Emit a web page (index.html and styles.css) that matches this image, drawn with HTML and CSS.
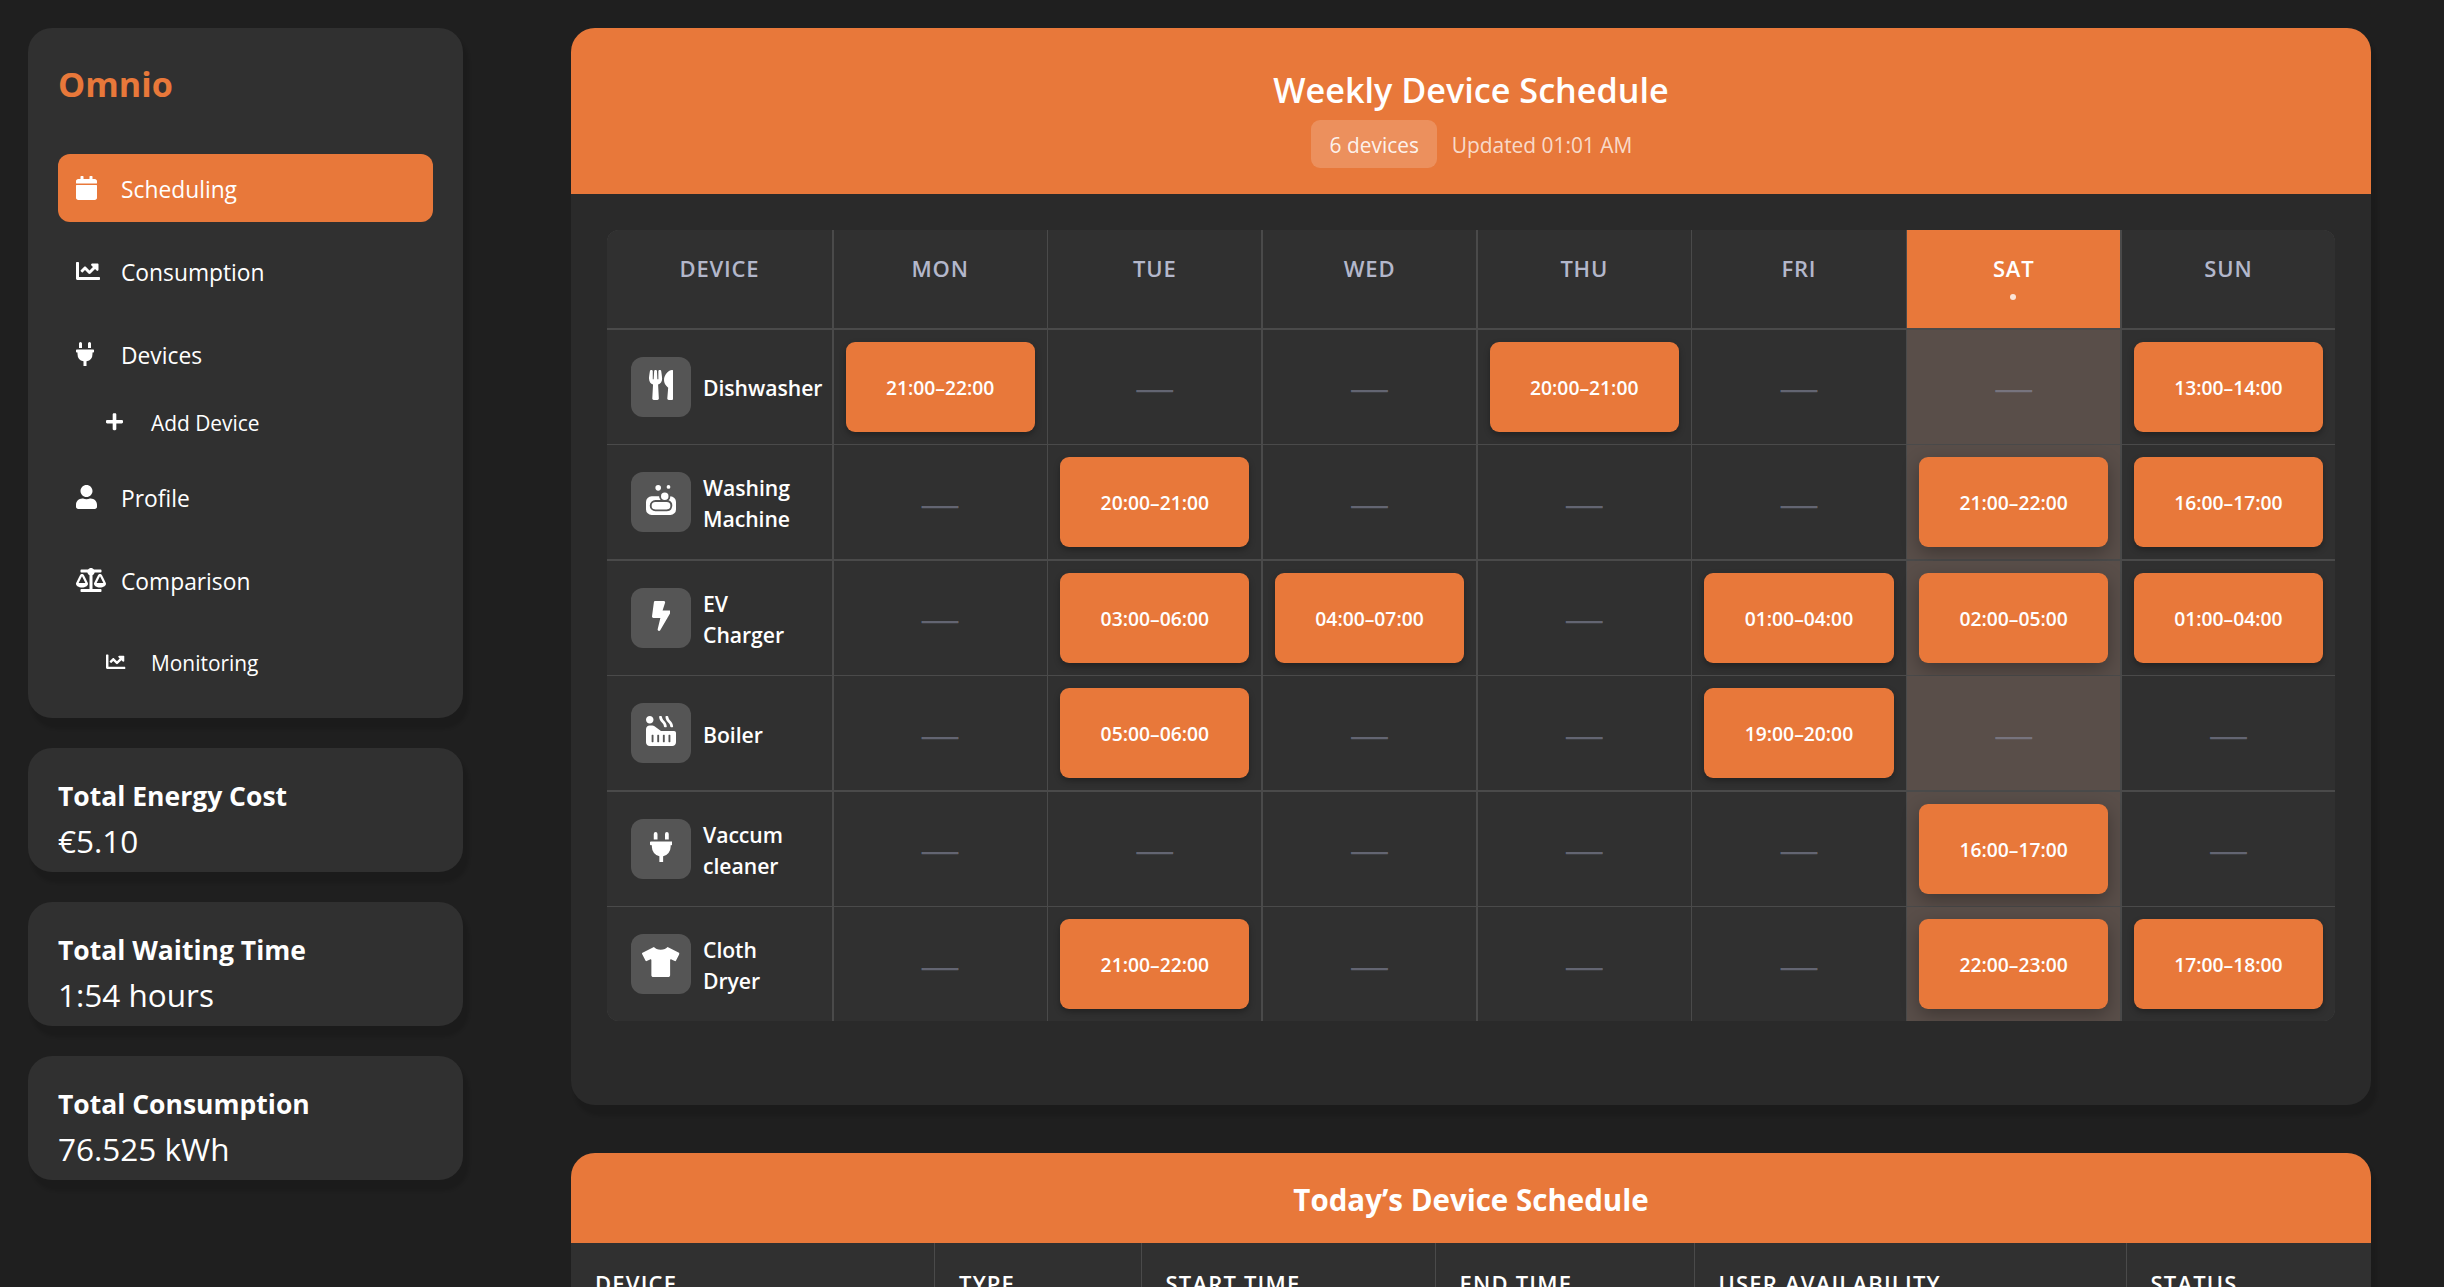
FILE: index.html
```html
<!DOCTYPE html>
<html lang="en">
<head>
<meta charset="utf-8">
<title>Omnio</title>
<link rel="stylesheet" href="styles.css">
</head>
<body>
<svg class="sprite" aria-hidden="true">
  <symbol id="calendar" viewBox="0 0 448 512"><path d="M12 192h424c6.6 0 12 5.4 12 12v260c0 26.5-21.5 48-48 48H48c-26.5 0-48-21.5-48-48V204c0-6.6 5.4-12 12-12zm436-44v-36c0-26.5-21.5-48-48-48h-48V12c0-6.6-5.4-12-12-12h-40c-6.6 0-12 5.4-12 12v52H160V12c0-6.6-5.4-12-12-12h-40c-6.6 0-12 5.4-12 12v52H48C21.5 64 0 85.5 0 112v36c0 6.6 5.4 12 12 12h424c6.6 0 12-5.4 12-12z"/></symbol>
  <symbol id="chart" viewBox="0 0 512 512"><path d="M496 384H64V80c0-8.84-7.16-16-16-16H16C7.16 64 0 71.16 0 80v336c0 17.67 14.33 32 32 32h464c8.84 0 16-7.16 16-16v-32c0-8.84-7.16-16-16-16zM464 96H345.94c-21.38 0-32.09 25.85-16.97 40.97l32.4 32.4L288 242.75l-73.37-73.37c-12.5-12.5-32.76-12.5-45.25 0l-68.69 68.69c-6.25 6.25-6.25 16.38 0 22.63l22.62 22.62c6.25 6.25 16.38 6.25 22.63 0L192 237.25l73.37 73.37c12.5 12.5 32.76 12.5 45.25 0l96-96 32.4 32.4c15.12 15.12 40.97 4.41 40.97-16.97V112c.01-8.84-7.15-16-15.99-16z"/></symbol>
  <symbol id="plug" viewBox="0 0 384 512"><path d="M320,32a32,32,0,0,0-64,0v96h64Zm48,128H16A16,16,0,0,0,0,176v32a16,16,0,0,0,16,16H32v32A160.07,160.07,0,0,0,160,412.8V512h64V412.8A160.07,160.07,0,0,0,352,256V224h16a16,16,0,0,0,16-16V176A16,16,0,0,0,368,160ZM128,32a32,32,0,0,0-64,0v96h64Z"/></symbol>
  <symbol id="plus" viewBox="0 0 448 512"><path d="M416 208H272V64c0-17.67-14.33-32-32-32h-32c-17.67 0-32 14.33-32 32v144H32c-17.67 0-32 14.33-32 32v32c0 17.67 14.33 32 32 32h144v144c0 17.67 14.33 32 32 32h32c17.67 0 32-14.33 32-32V304h144c17.67 0 32-14.33 32-32v-32c0-17.67-14.33-32-32-32z"/></symbol>
  <symbol id="user" viewBox="0 0 448 512"><path d="M224 256c70.7 0 128-57.3 128-128S294.7 0 224 0 96 57.3 96 128s57.3 128 128 128zm89.6 32h-16.7c-22.2 10.2-46.9 16-72.9 16s-50.6-5.8-72.9-16h-16.7C60.2 288 0 348.2 0 422.4V464c0 26.5 21.5 48 48 48h352c26.5 0 48-21.5 48-48v-41.6c0-74.2-60.2-134.4-134.4-134.4z"/></symbol>
  <symbol id="scale" viewBox="0 0 640 512"><path d="M256 336h-.02c0-16.18 1.34-8.73-85.05-181.51-17.65-35.29-68.19-35.36-85.87 0C-2.06 328.75.02 320.33.02 336H0c0 44.18 57.31 80 128 80s128-35.82 128-80zM128 176l72 144H56l72-144zm511.98 160c0-16.18 1.34-8.73-85.05-181.51-17.65-35.29-68.19-35.36-85.87 0-87.12 174.26-85.04 165.84-85.04 181.51H384c0 44.18 57.31 80 128 80s128-35.82 128-80h-.02zM440 320l72-144 72 144H440zm88 128H352V153.25c23.51-10.29 41.16-31.48 46.39-57.25H528c8.84 0 16-7.16 16-16V48c0-8.84-7.16-16-16-16H383.64C369.04 12.68 346.09 0 320 0s-48.96 12.68-63.64 32H112c-8.84 0-16 7.16-16 16v32c0 8.84 7.16 16 16 16h129.61c5.23 25.76 22.87 46.96 46.39 57.25V448H112c-8.84 0-16 7.16-16 16v32c0 8.84 7.16 16 16 16h416c8.84 0 16-7.16 16-16v-32c0-8.84-7.16-16-16-16z"/></symbol>
  <symbol id="utensils" viewBox="0 0 416 512"><path d="M207.9 15.2c.8 4.7 16.1 94.5 16.1 128.8 0 52.3-27.8 89.6-68.9 104.6L168 486.7c.7 13.7-10.2 25.3-24 25.3H80c-13.7 0-24.7-11.5-24-25.3l12.9-238.1C27.7 233.6 0 196.2 0 144 0 109.6 15.3 19.9 16.1 15.2 19.3-5.1 61.4-5.4 64 16.3v141.2c1.3 3.4 15.1 3.2 16 0 1.4-25.3 7.9-139.2 8-141.8 3.3-20.8 44.7-20.8 47.9 0 .2 2.7 6.6 116.5 8 141.8.9 3.2 14.8 3.4 16 0V16.3c2.6-21.6 44.8-21.4 48-1.1zm119.2 285.7l-15 185.1c-1.2 14 9.9 26 23.9 26h56c13.3 0 24-10.7 24-24V24c0-13.2-10.7-24-24-24-82.5 0-221.4 178.5-64.9 300.9z"/></symbol>
  <symbol id="soap" viewBox="0 0 512 512"><path d="M416 192a95.42 95.42 0 0 1-30.94 70.21A95.8 95.8 0 0 1 352 448H160a96 96 0 0 1 0-192h88.91A95.3 95.3 0 0 1 224 192H96a96 96 0 0 0-96 96v128a96 96 0 0 0 96 96h320a96 96 0 0 0 96-96V288a96 96 0 0 0-96-96zm-96 64a64 64 0 1 0-64-64 64 64 0 0 0 64 64zM208 96a48 48 0 1 0-48-48 48 48 0 0 0 48 48zm176-32a32 32 0 1 0-32-32 32 32 0 0 0 32 32zM160 288a64 64 0 0 0 0 128h192a64 64 0 0 0 0-128z"/></symbol>
  <symbol id="bolt" viewBox="0 0 320 512"><path d="M296 160H180.6l42.6-129.8C227.2 15 215.7 0 200 0H56C44 0 33.8 8.9 32.2 20.8l-32 240C-1.7 275.2 9.5 288 24 288h118.7L96.6 482.5c-3.6 15.2 8 29.5 23.3 29.5 8.4 0 16.4-4.4 20.8-12l176-304c9.3-15.9-2.2-36-20.7-36z"/></symbol>
  <symbol id="tub" viewBox="0 0 512 512"><path d="M414.21 177.65c1.02 8.21 7.75 14.35 15.75 14.35h16.12c9.51 0 17.08-8.57 16-18.35-4.34-39.11-22.4-74.53-50.13-97.16-17.37-14.17-28.82-36.75-31.98-62.15C378.96 6.14 372.22 0 364.23 0h-16.12c-9.51 0-17.09 8.57-16 18.35 4.34 39.11 22.4 74.53 50.13 97.16 17.36 14.17 28.82 36.75 31.97 62.14zm-108 0c1.02 8.21 7.75 14.35 15.75 14.35h16.12c9.51 0 17.08-8.57 16-18.35-4.34-39.11-22.4-74.53-50.13-97.16-17.37-14.17-28.82-36.75-31.98-62.15C270.96 6.14 264.22 0 256.23 0h-16.12c-9.51 0-17.09 8.57-16 18.35 4.34 39.11 22.4 74.53 50.13 97.16 17.36 14.17 28.82 36.75 31.97 62.14zM480 256H256l-110.93-83.2A63.99 63.99 0 0 0 106.67 160H64c-35.35 0-64 28.65-64 64v224c0 35.35 28.65 64 64 64h384c35.35 0 64-28.65 64-64V288c0-17.67-14.33-32-32-32zM128 440c0 4.42-3.58 8-8 8h-16c-4.42 0-8-3.58-8-8V328c0-4.42 3.58-8 8-8h16c4.42 0 8 3.58 8 8v112zm96 0c0 4.42-3.58 8-8 8h-16c-4.42 0-8-3.58-8-8V328c0-4.42 3.58-8 8-8h16c4.42 0 8 3.58 8 8v112zm96 0c0 4.42-3.58 8-8 8h-16c-4.42 0-8-3.58-8-8V328c0-4.42 3.58-8 8-8h16c4.42 0 8 3.58 8 8v112zm96 0c0 4.42-3.58 8-8 8h-16c-4.42 0-8-3.58-8-8V328c0-4.42 3.58-8 8-8h16c4.42 0 8 3.58 8 8v112zM64 128c35.35 0 64-28.65 64-64S99.35 0 64 0 0 28.65 0 64s28.65 64 64 64z"/></symbol>
  <symbol id="shirt" viewBox="0 0 640 512"><path d="M631.2 96.5L436.5 0C416.4 27.8 371.9 47.2 320 47.2S223.6 27.8 203.5 0L8.8 96.5c-7.9 4-11.1 13.6-7.2 21.5l57.2 114.5c4 7.9 13.6 11.1 21.5 7.2l56.6-27.7c10.6-5.2 23 2.5 23 14.4V480c0 17.7 14.3 32 32 32h256c17.7 0 32-14.3 32-32V226.3c0-11.8 12.4-19.6 23-14.4l56.6 27.7c7.9 4 17.5.8 21.5-7.2L638.3 118c4-7.9.8-17.6-7.1-21.5z"/></symbol>
</svg>
<div class="layout">
  <aside class="sidebar">
    <nav class="card nav">
      <div class="brand">Omnio</div>
      <a class="item active"><svg class="ico w448"><use href="#calendar"/></svg><span>Scheduling</span></a>
      <a class="item"><svg class="ico w512"><use href="#chart"/></svg><span>Consumption</span></a>
      <a class="item parent"><svg class="ico w384"><use href="#plug"/></svg><span>Devices</span></a>
      <a class="item sub"><svg class="ico w448"><use href="#plus"/></svg><span>Add Device</span></a>
      <a class="item"><svg class="ico w448"><use href="#user"/></svg><span>Profile</span></a>
      <a class="item before-last"><svg class="ico w640"><use href="#scale"/></svg><span>Comparison</span></a>
      <a class="item sub last"><svg class="ico w512"><use href="#chart"/></svg><span>Monitoring</span></a>
    </nav>
    <section class="card stat"><h3>Total Energy Cost</h3><p>€5.10</p></section>
    <section class="card stat"><h3>Total Waiting Time</h3><p>1:54 hours</p></section>
    <section class="card stat"><h3>Total Consumption</h3><p>76.525 kWh</p></section>
  </aside>
  <main class="main">
    <section class="panel weekly">
      <header class="panel-head">
        <h1>Weekly Device Schedule</h1>
        <div class="meta"><span class="chip">6 devices</span><span class="updated">Updated 01:01 AM</span></div>
      </header>
      <div class="panel-body">
        <div class="grid">
          <div class="th">DEVICE</div><div class="th">MON</div><div class="th">TUE</div><div class="th">WED</div><div class="th">THU</div><div class="th">FRI</div><div class="th today">SAT<i class="dot"></i></div><div class="th">SUN</div>

          <div class="dev"><span class="box"><svg class="ico w416"><use href="#utensils"/></svg></span><b>Dishwasher</b></div>
          <div class="td"><span class="slot">21:00–22:00</span></div><div class="td"><span class="none">—</span></div><div class="td"><span class="none">—</span></div><div class="td"><span class="slot">20:00–21:00</span></div><div class="td"><span class="none">—</span></div><div class="td sat"><span class="none">—</span></div><div class="td"><span class="slot">13:00–14:00</span></div>

          <div class="dev"><span class="box"><svg class="ico w512"><use href="#soap"/></svg></span><b>Washing<br>Machine</b></div>
          <div class="td"><span class="none">—</span></div><div class="td"><span class="slot">20:00–21:00</span></div><div class="td"><span class="none">—</span></div><div class="td"><span class="none">—</span></div><div class="td"><span class="none">—</span></div><div class="td sat"><span class="slot">21:00–22:00</span></div><div class="td"><span class="slot">16:00–17:00</span></div>

          <div class="dev"><span class="box"><svg class="ico w320"><use href="#bolt"/></svg></span><b>EV<br>Charger</b></div>
          <div class="td"><span class="none">—</span></div><div class="td"><span class="slot">03:00–06:00</span></div><div class="td"><span class="slot">04:00–07:00</span></div><div class="td"><span class="none">—</span></div><div class="td"><span class="slot">01:00–04:00</span></div><div class="td sat"><span class="slot">02:00–05:00</span></div><div class="td"><span class="slot">01:00–04:00</span></div>

          <div class="dev"><span class="box"><svg class="ico w512"><use href="#tub"/></svg></span><b>Boiler</b></div>
          <div class="td"><span class="none">—</span></div><div class="td"><span class="slot">05:00–06:00</span></div><div class="td"><span class="none">—</span></div><div class="td"><span class="none">—</span></div><div class="td"><span class="slot">19:00–20:00</span></div><div class="td sat"><span class="none">—</span></div><div class="td"><span class="none">—</span></div>

          <div class="dev"><span class="box"><svg class="ico w384"><use href="#plug"/></svg></span><b>Vaccum<br>cleaner</b></div>
          <div class="td"><span class="none">—</span></div><div class="td"><span class="none">—</span></div><div class="td"><span class="none">—</span></div><div class="td"><span class="none">—</span></div><div class="td"><span class="none">—</span></div><div class="td sat"><span class="slot">16:00–17:00</span></div><div class="td"><span class="none">—</span></div>

          <div class="dev"><span class="box"><svg class="ico w640"><use href="#shirt"/></svg></span><b>Cloth<br>Dryer</b></div>
          <div class="td"><span class="none">—</span></div><div class="td"><span class="slot">21:00–22:00</span></div><div class="td"><span class="none">—</span></div><div class="td"><span class="none">—</span></div><div class="td"><span class="none">—</span></div><div class="td sat"><span class="slot">22:00–23:00</span></div><div class="td"><span class="slot">17:00–18:00</span></div>
        </div>
      </div>
    </section>
    <section class="panel daily">
      <header class="daily-head"><h2>Today’s Device Schedule</h2></header>
      <div class="daily-cols">
        <div>DEVICE</div><div>TYPE</div><div>START TIME</div><div>END TIME</div><div>USER AVAILABILITY</div><div>STATUS</div>
      </div>
    </section>
  </main>
</div>
</body>
</html>
```
FILE: styles.css
```css
:root {
  --orange: #e8783a;
  --page: #1f1f1f;
  --panel: #2a2a2a;
  --card: #303030;
  --line: #4a4a4a;
}
* { box-sizing: border-box; }
body {
  margin: 0;
  height: 1287px;
  overflow: hidden;
  background: var(--page);
  color: #fff;
  font-family: "Open Sans", sans-serif;
}
h1, h2, h3, p { margin: 0; }
.sprite { display: none; }
.ico { display: block; height: 24px; fill: currentColor; flex: none; }

.layout { display: flex; gap: 108px; height: 1287px; padding: 28px 28px 0; }

/* Sidebar */
.sidebar { width: 435px; display: flex; flex-direction: column; gap: 30px; }
.card, .panel { box-shadow: 4.5px 9px 3px 1.5px rgba(0, 0, 0, .11); }
.card { background: var(--card); border-radius: 24px; padding: 30px; }
.nav { height: 690px; flex: none; }
.brand {
  height: 96px;
  line-height: 52px;
  font-size: 34.2px;
  font-weight: 700;
  color: var(--orange);
}
.item {
  display: flex;
  align-items: center;
  height: 68px;
  margin-bottom: 15px;
  padding-left: 18px;
  border-radius: 12px;
  font-size: 22.8px;
}
.item .ico { margin-right: 15px; }
.item span { padding-top: 3px; }
.item .w448 { width: 21px; margin-right: 24px; }
.item .w512 { width: 24px; margin-right: 21px; }
.item .w384 { width: 18px; margin-right: 27px; }
.item .w640 { width: 30px; margin-right: 15px; }
.item.active { background: var(--orange); }
.item.parent { margin-bottom: 6px; }
.item.sub { height: 56px; margin-bottom: 13px; padding-left: 48px; font-size: 20.9px; }
.item.sub span { padding-top: 2px; }
.item.sub .ico { height: 19.5px; }
.item.sub .w448 { width: 17px; margin-right: 28px; }
.item.sub .w512 { width: 19.5px; margin-right: 25.5px; }
.item.before-last { margin-bottom: 20px; }
.item.sub.last { margin-bottom: 0; }

.stat { height: 124px; padding-top: 31px; flex: none; }
.stat h3 { font-size: 26.5px; line-height: 35px; font-weight: 700; }
.stat p { margin-top: 4px; font-size: 31.5px; line-height: 46px; }

/* Weekly schedule */
.main { width: 1800px; display: flex; flex-direction: column; gap: 48px; }
.panel { background: var(--panel); border-radius: 24px; }
.weekly { height: 1077px; flex: none; }
.panel-head {
  height: 166px;
  padding-top: 36px;
  border-radius: 24px 24px 0 0;
  background: var(--orange);
  text-align: center;
}
.panel-head h1 { height: 56px; font-size: 34.2px; line-height: 51px; font-weight: 600; }
.meta { display: flex; justify-content: center; align-items: center; gap: 15px; padding-left: 1px; font-size: 20.9px; }
.chip {
  width: 126px;
  height: 48px;
  padding: 1px 0 0 1px;
  line-height: 48px;
  border-radius: 9px;
  background: rgba(255, 255, 255, .18);
  color: rgba(255, 255, 255, .9);
}
.updated { padding-top: 1px; color: rgba(255, 255, 255, .74); }
.panel-body { padding: 36px; }
.grid {
  display: grid;
  grid-template-columns: 225px repeat(7, 1fr);
  grid-template-rows: 98px repeat(6, 114px);
  gap: 1.5px;
  border-radius: 12px;
  overflow: hidden;
  background: var(--line);
}
.th, .td, .dev { background: var(--card); }
.th {
  display: flex;
  flex-direction: column;
  align-items: center;
  padding-top: 23px;
  font-size: 22px;
  line-height: 30px;
  font-weight: 600;
  letter-spacing: .8px;
  color: #b3b7cb;
}
.th.today { background: var(--orange); color: #fff; }
.dot { width: 6px; height: 6px; margin: 11px 1px 0 0; border-radius: 50%; background: rgba(255, 255, 255, .8); }
.dev { display: flex; align-items: center; gap: 12px; padding-left: 24px; }
.dev b { padding-top: 2px; font-size: 21.2px; line-height: 31px; font-weight: 600; letter-spacing: -.05px; }
.box {
  display: flex;
  align-items: center;
  justify-content: center;
  width: 60px;
  height: 60px;
  padding-bottom: 4px;
  border-radius: 12px;
  background: #555;
}
.box .ico { height: 30px; }
.box .w416 { width: 24.4px; }
.box .w512 { width: 30px; }
.box .w320 { width: 18.75px; }
.box .w384 { width: 22.5px; }
.box .w640 { width: 37.5px; }
.td { display: flex; align-items: center; justify-content: center; padding: 12px; }
.td.sat { background: #594e49; }
.slot {
  flex: 1;
  height: 90px;
  padding-top: 1px;
  line-height: 90px;
  border-radius: 9px;
  background: var(--orange);
  box-shadow: 0 3px 6px rgba(0, 0, 0, .3);
  text-align: center;
  font-size: 19.3px;
  font-weight: 600;
}
.sat .slot { box-shadow: 0 6px 18px rgba(0, 0, 0, .3); }
.none {
  padding-top: 3px;
  font-family: "Liberation Serif", serif;
  font-size: 36px;
  line-height: 40px;
  color: rgba(150, 155, 180, .45);
  -webkit-text-stroke: .4px rgba(150, 155, 180, .45);
}

/* Today's schedule */
.daily { flex: 1; overflow: hidden; border-radius: 24px 24px 0 0; background: var(--card); }
.daily-head { height: 90px; background: var(--orange); text-align: center; }
.daily-head h2 { padding-top: 1px; font-size: 29.5px; line-height: 92px; height: 90px; font-weight: 700; }
.daily-cols {
  display: grid;
  grid-template-columns: 364px 206.5px 294px 259px 432px 244.5px;
}
.daily-cols div {
  padding-left: 24px;
  border-right: 1px solid var(--line);
  font-size: 22px;
  line-height: 81px;
  font-weight: 600;
  letter-spacing: 1.2px;
}
.daily-cols div:last-child { border-right: 0; }
```
